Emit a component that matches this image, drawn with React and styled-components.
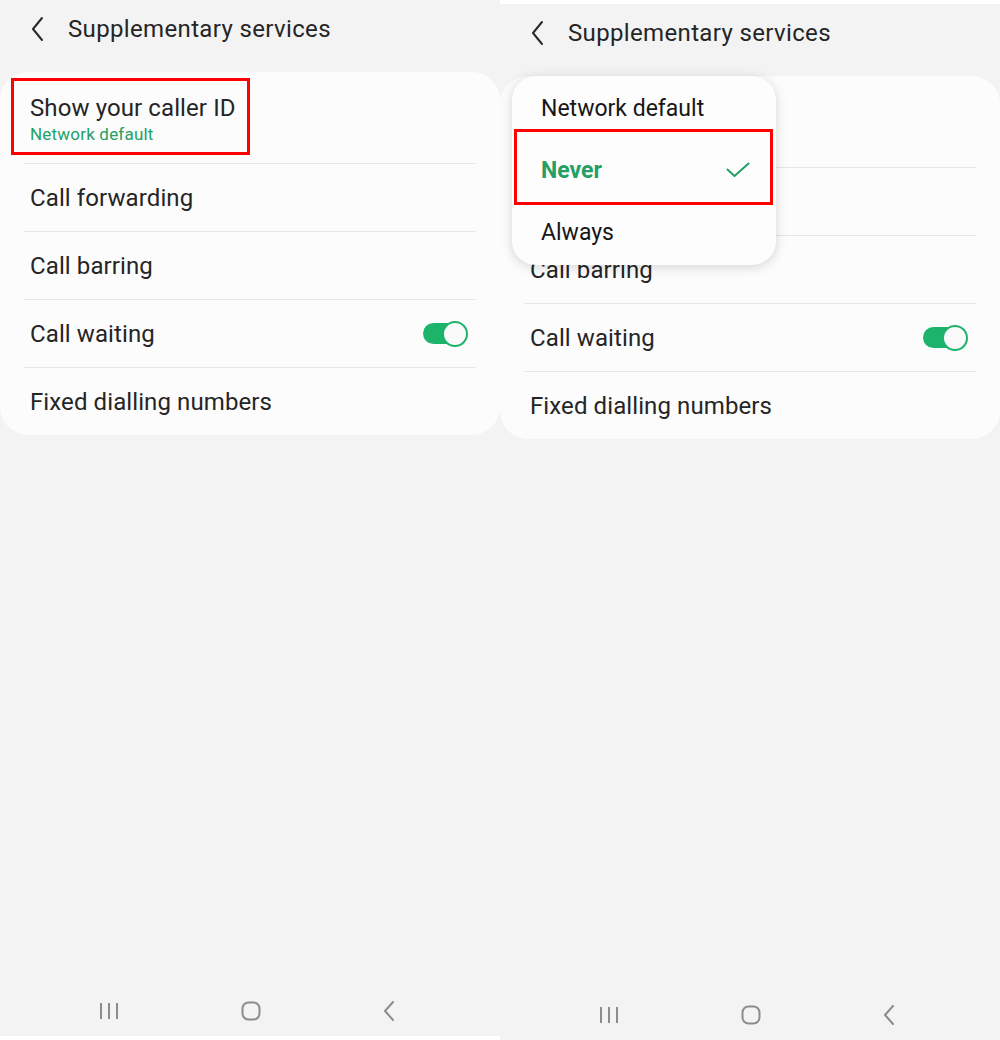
import React from "react";
import styled, { createGlobalStyle } from "styled-components";

const GlobalStyle = createGlobalStyle`
  html, body {
    margin: 0;
    padding: 0;
    background: #ffffff;
  }
  * {
    box-sizing: border-box;
  }
`;

const Page = styled.div`
  display: flex;
  width: 1000px;
  height: 1040px;
  font-family: Roboto, "Noto Sans", sans-serif;
`;

const Screen = styled.div`
  position: relative;
  display: flex;
  flex-direction: column;
  width: 500px;
  height: 1036px;
  margin-top: ${props => props.offset || 0}px;
  background: #f3f3f3;
`;

const Header = styled.div`
  display: flex;
  align-items: center;
  height: 58px;
  padding-left: 28px;
  gap: 20px;
`;

const Title = styled.h1`
  margin: 0;
  font-size: 24px;
  font-weight: 400;
  color: #252525;
  letter-spacing: 0.35px;
`;

const Card = styled.div`
  position: relative;
  margin-top: 14px;
  background: #fcfcfc;
  border-radius: 28px;
  display: flex;
  flex-direction: column;
`;

const Row = styled.div`
  position: relative;
  display: flex;
  align-items: center;
  justify-content: space-between;
  height: ${props => (props.tall ? 91 : 68)}px;
  margin: 0 24px;
  padding: 0 8px 0 6px;
  border-top: ${props => (props.first ? "none" : "1px solid #e7e7e7")};
`;

const Texts = styled.div`
  display: flex;
  flex-direction: column;
  gap: 2px;
  padding-top: 2px;
  visibility: ${props => (props.covered ? "hidden" : "visible")};
`;

const Label = styled.span`
  font-size: 24px;
  color: #252525;
  letter-spacing: 0.1px;
`;

const Sub = styled.span`
  font-size: 17px;
  color: #23a065;
  letter-spacing: 0.2px;
`;

const Toggle = styled.div`
  position: relative;
  width: 45px;
  height: 26px;
  display: flex;
  align-items: center;
`;

const Track = styled.div`
  width: 38px;
  height: 21px;
  border-radius: 11px;
  background: #1cb46b;
`;

const Thumb = styled.div`
  position: absolute;
  right: 0;
  top: 0;
  width: 26px;
  height: 26px;
  border-radius: 50%;
  background: #fafafa;
  border: 2px solid #1cb46b;
`;

const Highlight = styled.div`
  position: absolute;
  left: ${props => props.x}px;
  top: ${props => props.y}px;
  width: ${props => props.w}px;
  height: ${props => props.h}px;
  border: 3px solid #ff0000;
  pointer-events: none;
`;

const Popup = styled.div`
  position: absolute;
  left: 12px;
  top: 72px;
  width: 264px;
  padding: 1px 0 2px;
  background: #fdfdfd;
  border-radius: 24px;
  box-shadow: 0 2px 12px rgba(0, 0, 0, 0.16);
  display: flex;
  flex-direction: column;
`;

const Option = styled.div`
  display: flex;
  align-items: center;
  justify-content: space-between;
  height: 62px;
  padding: 0 26px 0 29px;
  font-size: 23px;
  font-weight: ${props => (props.selected ? 700 : 400)};
  color: ${props => (props.selected ? "#23a065" : "#161616")};
`;

const Spacer = styled.div`
  flex: 1;
`;

const NavBar = styled.div`
  display: flex;
  justify-content: space-between;
  align-items: center;
  height: 50px;
  padding: 0 105px 0 99px;
`;

const Chevron = ({ size = 20, color = "#2a2a2a", width = 2 }) => (
  <svg width={size} height={size * 1.3} viewBox="0 0 20 26" fill="none">
    <path d="M14 2 L5 13 L14 24" stroke={color} strokeWidth={width} strokeLinecap="round" strokeLinejoin="round" />
  </svg>
);

const Check = () => (
  <svg width="24" height="16" viewBox="0 0 24 16" fill="none">
    <path d="M1.5 7.5 L8.5 14 L22.5 1.5" stroke="#23a065" strokeWidth="2" strokeLinecap="round" strokeLinejoin="round" />
  </svg>
);

const RecentsIcon = () => (
  <svg width="20" height="18" viewBox="0 0 20 18" fill="none">
    <path d="M2 1 V17 M10 1 V17 M18 1 V17" stroke="#8c8c8c" strokeWidth="2" />
  </svg>
);

const HomeIcon = () => (
  <svg width="20" height="20" viewBox="0 0 20 20" fill="none">
    <rect x="1.5" y="1.5" width="17" height="17" rx="6" stroke="#8c8c8c" strokeWidth="2" />
  </svg>
);

const BackIcon = () => (
  <svg width="12" height="20" viewBox="0 0 12 20" fill="none">
    <path d="M10 1 L2 10 L10 19" stroke="#8c8c8c" strokeWidth="2" strokeLinecap="round" strokeLinejoin="round" />
  </svg>
);

const rows = [
  { label: "Call forwarding" },
  { label: "Call barring" },
  { label: "Call waiting", toggle: true },
  { label: "Fixed dialling numbers" },
];

// first row is hidden under the dropdown on the second screen
const SettingsCard = ({ covered }) => (
  <Card>
    <Row tall first>
      <Texts covered={covered}>
        <Label>Show your caller ID</Label>
        <Sub>Network default</Sub>
      </Texts>
    </Row>
    {rows.map(row => (
      <Row key={row.label}>
        <Label>{row.label}</Label>
        {row.toggle && (
          <Toggle>
            <Track />
            <Thumb />
          </Toggle>
        )}
      </Row>
    ))}
  </Card>
);

const ScreenFrame = ({ offset, children, covered }) => (
  <Screen offset={offset}>
    <Header>
      <Chevron size={20} />
      <Title>Supplementary services</Title>
    </Header>
    <SettingsCard covered={covered} />
    <Spacer />
    <NavBar>
      <RecentsIcon />
      <HomeIcon />
      <BackIcon />
    </NavBar>
    {children}
  </Screen>
);

export default function App() {
  return (
    <Page>
      <GlobalStyle />
      <ScreenFrame>
        <Highlight x={11} y={78} w={239} h={77} />
      </ScreenFrame>
      <ScreenFrame offset={4} covered>
        <Popup>
          <Option>Network default</Option>
          <Option selected>
            Never
            <Check />
          </Option>
          <Option>Always</Option>
        </Popup>
        <Highlight x={14} y={125} w={259} h={76} />
      </ScreenFrame>
    </Page>
  );
}
